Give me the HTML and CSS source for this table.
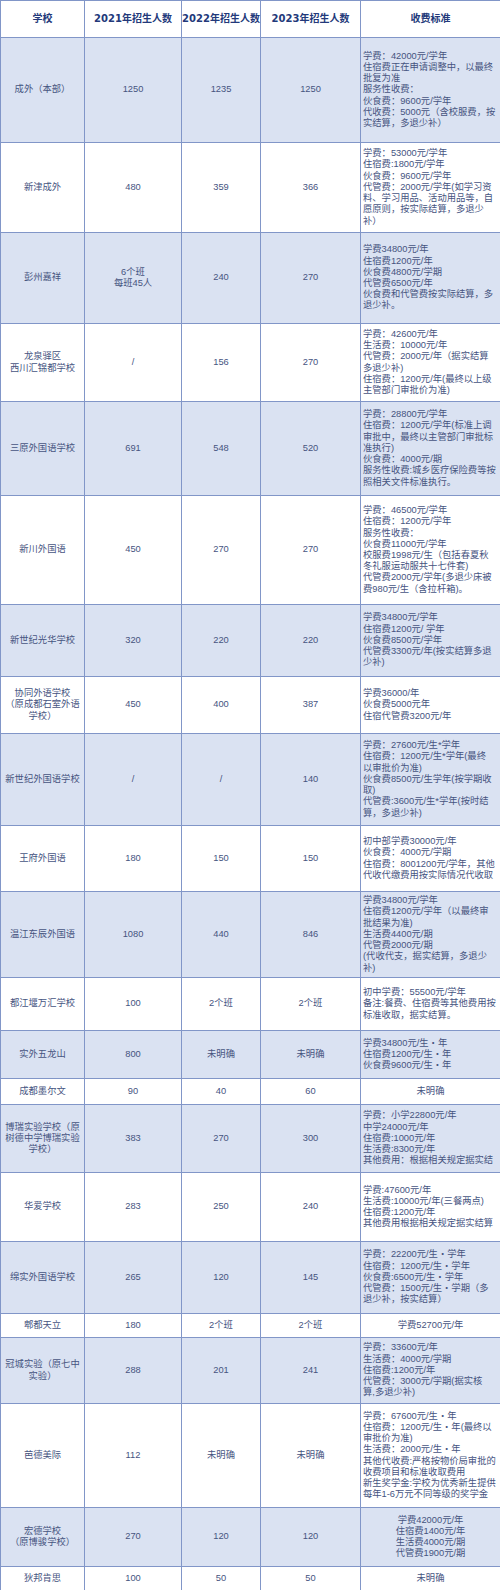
FILE: index.html
```html
<!DOCTYPE html>
<html lang="zh-CN">
<head>
<meta charset="utf-8">
<title>招生人数与收费标准</title>
<link rel="stylesheet" href="styles.css">
</head>
<body>
<table class="fees">
  <colgroup>
    <col class="c-school">
    <col class="c-y21">
    <col class="c-y22">
    <col class="c-y23">
    <col class="c-fee">
  </colgroup>
  <thead>
    <tr class="head">
      <th>学校</th>
      <th>2021年招生人数</th>
      <th>2022年招生人数</th>
      <th>2023年招生人数</th>
      <th>收费标准</th>
    </tr>
  </thead>
  <tbody>
    <tr class="blue h105">
      <td>成外（本部）</td><td>1250</td><td>1235</td><td>1250</td>
      <td class="fee">学费：42000元/学年<br>住宿费正在申请调整中，以最终<br>批复为准<br>服务性收费：<br>伙食费：9600元/学年<br>代收费：5000元（含校服费，按<br>实结算，多退少补）</td>
    </tr>
    <tr class="white h90">
      <td>新津成外</td><td>480</td><td>359</td><td>366</td>
      <td class="fee">学费：53000元/学年<br>住宿费:1800元/学年<br>伙食费：9600元/学年<br>代管费：2000元/学年(如学习资<br>料、学习用品、活动用品等，自<br>愿原则，按实际结算，多退少<br>补）</td>
    </tr>
    <tr class="blue h91">
      <td>彭州嘉祥</td><td>6个班<br>每班45人</td><td>240</td><td>270</td>
      <td class="fee">学费34800元/年<br>住宿费1200元/年<br>伙食费4800元/学期<br>代管费6500元/年<br>伙食费和代管费按实际结算，多<br>退少补。</td>
    </tr>
    <tr class="white h78">
      <td>龙泉驿区<br>西川汇锦都学校</td><td>/</td><td>156</td><td>270</td>
      <td class="fee">学费：42600元/年<br>生活费：10000元/年<br>代管费：2000元/年（据实结算<br>多退少补)<br>住宿费：1200元/年(最终以上级<br>主管部门审批价为准)</td>
    </tr>
    <tr class="blue h94">
      <td>三原外国语学校</td><td>691</td><td>548</td><td>520</td>
      <td class="fee">学费：28800元/学年<br>住宿费：1200元/学年(标准上调<br>审批中，最终以主管部门审批标<br>准执行)<br>伙食费：4000元/期<br>服务性收费:城乡医疗保险费等按<br>照相关文件标准执行。</td>
    </tr>
    <tr class="white h109">
      <td>新川外国语</td><td>450</td><td>270</td><td>270</td>
      <td class="fee">学费：46500元/学年<br>住宿费：1200元/学年<br>服务性收费：<br>伙食费11000元/学年<br>校服费1998元/生（包括春夏秋<br>冬礼服运动服共十七件套)<br>代管费2000元/学年(多退少床被<br>费980元/生（含拉杆箱)。</td>
    </tr>
    <tr class="blue h72">
      <td>新世纪光华学校</td><td>320</td><td>220</td><td>220</td>
      <td class="fee">学费34800元/学年<br>住宿费1200元/ 学年<br>伙食费8500元/学年<br>代管费3300元/年(按实结算多退<br>少补)</td>
    </tr>
    <tr class="white h57">
      <td>协同外语学校<br>（原成都石室外语<br>学校）</td><td>450</td><td>400</td><td>387</td>
      <td class="fee">学费36000/年<br>伙食费5000元年<br>住宿代管费3200元/年</td>
    </tr>
    <tr class="blue h92">
      <td>新世纪外国语学校</td><td>/</td><td>/</td><td>140</td>
      <td class="fee">学费：27600元/生*学年<br>住宿费：1200元/生*学年(最终<br>以审批价为准)<br>伙食费8500元/生学年(按学期收<br>取)<br>代管费:3600元/生*学年(按时结<br>算，多退少补)</td>
    </tr>
    <tr class="white h66">
      <td>王府外国语</td><td>180</td><td>150</td><td>150</td>
      <td class="fee">初中部学费30000元/年<br>伙食费：4000元/学期<br>住宿费：8001200元/学年，其他<br>代收代缴费用按实际情况代收取</td>
    </tr>
    <tr class="blue h86">
      <td>温江东辰外国语</td><td>1080</td><td>440</td><td>846</td>
      <td class="fee">学费34800元/学年<br>住宿费1200元/学年（以最终审<br>批结果为准)<br>生活费4400元/期<br>代管费2000元/期<br>(代收代支，据实结算，多退少<br>补)</td>
    </tr>
    <tr class="white h53">
      <td>都江堰万汇学校</td><td>100</td><td>2个班</td><td>2个班</td>
      <td class="fee">初中学费：55500元/学年<br>备注:餐费、住宿费等其他费用按<br>标准收取，据实结算。</td>
    </tr>
    <tr class="blue h48">
      <td>实外五龙山</td><td>800</td><td>未明确</td><td>未明确</td>
      <td class="fee">学费34800元/生・年<br>住宿费1200元/生・年<br>伙食费9600元/生・年</td>
    </tr>
    <tr class="white h26">
      <td>成都墨尔文</td><td>90</td><td>40</td><td>60</td>
      <td>未明确</td>
    </tr>
    <tr class="blue h68">
      <td>博瑞实验学校（原<br>树德中学博瑞实验<br>学校）</td><td>383</td><td>270</td><td>300</td>
      <td class="fee">学费：小学22800元/年<br>中学24000元/年<br>住宿费:1000元/年<br>生活费:8300元/年<br>其他费用：根据相关规定据实结</td>
    </tr>
    <tr class="white h69">
      <td>华爱学校</td><td>283</td><td>250</td><td>240</td>
      <td class="fee">学费:47600元/年<br>生活费:10000元/年(三餐两点)<br>住宿费:1200元/年<br>其他费用根据相关规定据实结算</td>
    </tr>
    <tr class="blue h72">
      <td>绵实外国语学校</td><td>265</td><td>120</td><td>145</td>
      <td class="fee">学费：22200元/生・学年<br>住宿费：1200元/生・学年<br>伙食费:6500元/生・学年<br>代管费：1500元/生・学期（多<br>退少补，按实结算）</td>
    </tr>
    <tr class="white h24">
      <td>郫都天立</td><td>180</td><td>2个班</td><td>2个班</td>
      <td>学费52700元/年</td>
    </tr>
    <tr class="blue h66">
      <td>冠城实验（原七中<br>实验）</td><td>288</td><td>201</td><td>241</td>
      <td class="fee">学费：33600元/年<br>生活费：4000元/学期<br>住宿费:1200元/年<br>代管费：3000元/学期(据实核<br>算,多退少补)</td>
    </tr>
    <tr class="white h104">
      <td>芭德美际</td><td>112</td><td>未明确</td><td>未明确</td>
      <td class="fee">学费：67600元/生・年<br>住宿费：1200元/生・年(最终以<br>审批价为准)<br>生活费：2000元/生・年<br>其他代收费:严格按物价局审批的<br>收费项目和标准收取费用<br>新生奖学金:学校为优秀新生提供<br>每年1-6万元不同等级的奖学金</td>
    </tr>
    <tr class="blue h59">
      <td>宏德学校<br>（原博骏学校）</td><td>270</td><td>120</td><td>120</td>
      <td>学费42000元/年<br>住宿费1400元/年<br>生活费4000元/期<br>代管费1900元/期</td>
    </tr>
    <tr class="white h24">
      <td>狄邦肯思</td><td>100</td><td>50</td><td>50</td>
      <td>未明确</td>
    </tr>
  </tbody>
</table>
</body>
</html>
```
FILE: styles.css
```css
html, body {
  margin: 0;
  padding: 0;
  background: #ffffff;
}

.fees {
  width: 500px;
  table-layout: fixed;
  border-collapse: collapse;
  font-family: "Liberation Sans", "Noto Sans CJK SC", sans-serif;
  font-size: 9.3px;
  line-height: 11.2px;
  color: #46547f;
}

.c-school { width: 84px; }
.c-y21 { width: 97px; }
.c-y22 { width: 79px; }
.c-y23 { width: 100px; }
.c-fee { width: 140px; }

.fees th,
.fees td {
  border: 1px solid #8196c8;
  padding: 0 2px;
  text-align: center;
  vertical-align: middle;
  white-space: nowrap;
  overflow: hidden;
}

.fees .head {
  height: 37px;
  background: #ffffff;
}

.fees th {
  padding: 0;
  overflow: visible;
  font-family: "DejaVu Sans", "Noto Sans CJK SC", sans-serif;
  font-size: 10px;
  font-weight: bold;
  color: #23397a;
}

.fees td.fee {
  text-align: left;
  padding-left: 2px;
}

.blue { background: #dae2f2; }
.white { background: #ffffff; }

/* row heights (border included) */
.h24 { height: 24px; }
.h26 { height: 26px; }
.h48 { height: 48px; }
.h53 { height: 53px; }
.h57 { height: 57px; }
.h59 { height: 59px; }
.h66 { height: 66px; }
.h68 { height: 68px; }
.h69 { height: 69px; }
.h72 { height: 72px; }
.h78 { height: 78px; }
.h86 { height: 86px; }
.h90 { height: 90px; }
.h91 { height: 91px; }
.h92 { height: 92px; }
.h94 { height: 94px; }
.h104 { height: 104px; }
.h105 { height: 105px; }
.h109 { height: 109px; }
```
